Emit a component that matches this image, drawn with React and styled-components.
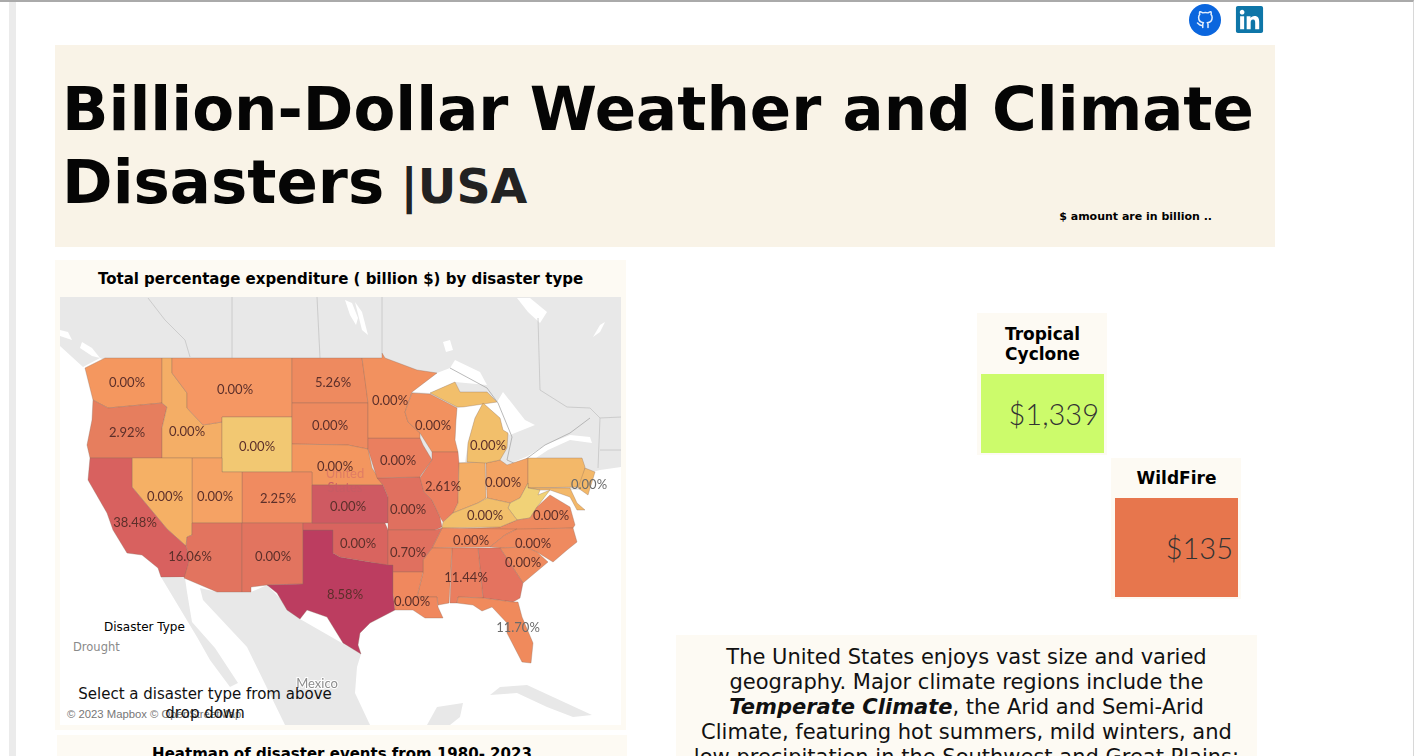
import React from 'react';
import styled, { createGlobalStyle } from 'styled-components';
import { FaLinkedin } from 'react-icons/fa';
import { FiGithub } from 'react-icons/fi';

const GlobalStyle = createGlobalStyle`
  html, body {
    margin: 0;
    padding: 0;
    background: #fff;
    font-family: "DejaVu Sans", sans-serif;
    color: #000;
  }
`;

const Shell = styled.div`
  height: 756px;
  box-sizing: border-box;
  overflow: hidden;
  border-top: 2px solid #aaa;
  border-right: 1px solid #d8d8d8;
`;

const Page = styled.div`
  margin-left: 9px;
  height: 754px;
  box-sizing: border-box;
  border-left: 7px solid #ebebeb;
  padding-left: 39px;
  width: 1266px;
`;

const IconBar = styled.div`
  display: flex;
  justify-content: flex-end;
  align-items: center;
  gap: 13px;
  height: 33px;
  padding: 1px 10px 0 0;
  margin-bottom: 9px;
  box-sizing: content-box;
`;

const GithubLink = styled.a`
  width: 32px;
  height: 32px;
  border-radius: 50%;
  background: #0b66de;
  color: #e4eefc;
  display: flex;
  align-items: center;
  justify-content: center;
`;

const LinkedinLink = styled.a`
  color: #0e76a8;
  display: flex;
  line-height: 0;
`;

const Banner = styled.header`
  height: 202px;
  box-sizing: border-box;
  background: #f9f3e7;
  padding: 27px 7px 0;
`;

const Title = styled.h1`
  margin: 0;
  font-size: 61px;
  line-height: 73px;
  font-weight: 700;
  color: #050505;
  span {
    margin-left: -5px;
    font-size: 47.5px;
    color: #222;
  }
`;

const Note = styled.p`
  margin: -13px 56px 0 0;
  text-align: right;
  font-size: 11px;
  line-height: 14px;
  font-weight: 700;
`;

const Columns = styled.div`
  display: grid;
  grid-template-columns: 571px 1fr;
  margin-top: 13px;
`;

const LeftColumn = styled.section`
  display: flex;
  flex-direction: column;
  gap: 5px;
`;

const MapPanel = styled.div`
  background: #fdfaf3;
  padding: 0 5px 5px;
`;

const PanelTitle = styled.h2`
  margin: 0;
  height: 37px;
  line-height: 39px;
  font-size: 15px;
  font-weight: 700;
  text-align: center;
`;

const MapCanvas = styled.div`
  position: relative;
  height: 428px;
  background: #fff;
  overflow: hidden;
  svg {
    display: block;
    filter: blur(0.3px);
  }
`;

const StateLabel = styled.text`
  font-family: "Lato", sans-serif;
  font-size: 13px;
  text-anchor: middle;
  fill: #5c2f2a;
`;

const PlaceLabel = styled.text`
  font-family: "Lato", sans-serif;
  font-size: 13px;
  text-anchor: middle;
  fill: ${(p) => p.$color};
  paint-order: stroke;
  stroke: ${(p) => p.$halo || 'none'};
  stroke-width: 2px;
`;

const LegendTitle = styled.div`
  position: absolute;
  left: 44px;
  top: 323px;
  font-size: 12px;
  line-height: 14px;
`;

const LegendValue = styled.div`
  position: absolute;
  left: 13px;
  top: 343px;
  font-size: 11.5px;
  line-height: 14px;
  color: #8a8a8a;
`;

const Attribution = styled.div`
  position: absolute;
  left: 7px;
  top: 411px;
  font-family: "Liberation Sans", sans-serif;
  font-size: 11.3px;
  line-height: 13px;
  color: #777;
`;

const MapHint = styled.div`
  position: absolute;
  left: 14px;
  top: 388px;
  width: 262px;
  font-size: 15px;
  line-height: 19px;
  text-align: center;
  color: #111;
`;

const HeatmapPanel = styled.div`
  margin-left: 2px;
  width: 570px;
  background: #fdfaf3;
`;

const RightColumn = styled.section`
  display: flex;
  flex-direction: column;
  padding: 53px 0 0 51px;
`;

const TileGrid = styled.div`
  display: grid;
  grid-template-columns: 130px 130px;
  column-gap: 4px;
  row-gap: 3px;
  margin-left: 300px;
`;

const Tile = styled.div`
  grid-column: ${(p) => p.$column};
  grid-row: ${(p) => p.$row};
  background: #fdfaf3;
  padding: 0 3px 2px 4px;
`;

const TileTitle = styled.div`
  display: flex;
  align-items: center;
  justify-content: center;
  height: ${(p) => p.$height}px;
  box-sizing: border-box;
  font-size: 17px;
  line-height: 20px;
  font-weight: 700;
  text-align: center;
`;

const TileValue = styled.div`
  display: flex;
  align-items: center;
  justify-content: flex-end;
  height: ${(p) => p.$height}px;
  padding-right: 5px;
  background: ${(p) => p.$color};
  font-family: "Lato", sans-serif;
  font-weight: 300;
  font-size: 29px;
  color: #333;
`;

const Story = styled.div`
  margin: 36px 0 0 -1px;
  width: 581px;
  box-sizing: border-box;
  padding: 10px 14px 0;
  background: #fdfaf3;
  font-size: 21px;
  line-height: 25px;
  text-align: center;
  color: #111;
  b { font-style: italic; }
`;

// state outlines, in page pixels (viewBox lines them up with the screenshot)
const STATES = [
  ['#f4975f', '85,368 105,358 162,358 162,403 108,408 93,400'],
  ['#e67e5e', '93,400 108,408 162,403 167,407 162,428 162,458 90,458 87,445 92,420'],
  ['#f4ae66', '162,358 172,358 172,373 187,393 187,408 203,425 222,422 222,458 162,458 162,428 167,407 162,403'],
  ['#f59763', '172,358 292,358 292,417 222,417 222,422 203,425 187,408 187,393 172,373'],
  ['#f2c872', '222,417 292,417 292,472 222,472'],
  ['#ee8a5f', '292,358 362,358 366,385 368,403 292,403'],
  ['#ee8a5f', '292,403 368,403 368,449 357,447 348,445 292,444'],
  ['#f3965f', '292,444 348,445 368,449 372,468 383,485 312,485 312,472 292,472'],
  ['#f08b60', '242,472 312,472 312,523 242,523'],
  ['#f5a264', '192,458 222,458 222,472 242,472 242,523 192,523'],
  ['#f5b065', '132,458 192,458 192,535 187,537 186,546 167,529 132,487'],
  ['#d8615f', '90,458 132,458 132,487 167,529 186,546 190,558 185,577 161,577 158,568 142,555 127,553 113,530 107,513 88,480'],
  ['#e2745f', '192,523 242,523 242,592 217,592 184,578 190,558 186,546 187,537 192,535'],
  ['#e2745f', '242,523 303,523 303,584 267,585 251,587 251,592 242,592'],
  ['#bc3d60', '303,530 333,530 333,553 340,557 370,562 393,565 393,593 395,610 370,623 360,633 358,645 361,654 343,643 327,617 307,610 300,619 287,610 277,593 267,585 303,584'],
  ['#d9645f', '303,523 385,523 388,530 388,565 370,562 340,557 333,553 333,530 303,530'],
  ['#cf5a62', '312,485 383,485 388,497 388,523 312,523'],
  ['#e0705f', '377,478 420,477 424,492 432,500 440,517 442,527 435,530 388,530 388,497 383,485'],
  ['#ea7f5f', '368,438 420,438 423,445 432,460 421,475 420,477 377,478 368,449'],
  ['#f2915f', '362,358 382,358 382,353 385,358 417,370 437,373 412,392 405,412 408,422 420,433 420,438 368,438 368,403'],
  ['#f2915f', '412,393 430,394 457,408 456,420 455,440 458,452 432,452 420,433 408,422 405,412'],
  ['#ec7f5f', '432,452 458,452 459,463 458,503 453,513 443,522 440,517 432,500 424,492 420,478 432,460'],
  ['#f4ae66', '459,463 485,462 486,498 478,503 453,513 458,503'],
  ['#f3a363', '486,463 500,460 507,465 528,458 528,483 520,498 510,503 487,498'],
  ['#f2bf6b', '430,393 455,382 460,392 487,392 497,402 463,407 457,407'],
  ['#f2bf6b', '467,462 468,443 475,418 483,403 500,418 503,430 508,433 507,448 500,460 486,463'],
  ['#f3b869', '528,458 582,458 585,467 582,487 528,488'],
  ['#f3b869', '585,468 595,472 588,495 578,488'],
  ['#f3b869', '528,488 570,488 577,503 585,510 577,510 570,497 550,490 540,490'],
  ['#f1d277', '508,508 510,503 520,498 528,483 528,488 540,490 538,495 550,490 537,507 530,518 517,520'],
  ['#ee8a5f', '500,527 517,520 530,518 537,507 550,495 570,507 575,525 573,528 517,530 442,530'],
  ['#f2bf6b', '453,513 478,503 487,498 510,503 508,508 517,520 500,527 442,528 443,522'],
  ['#f08b5f', '442,528 517,529 505,535 490,547 432,548'],
  ['#ef8a5f', '517,529 573,528 577,542 567,550 553,562 537,552 525,547 500,548 490,547 505,535'],
  ['#ef8b5f', '500,548 525,547 537,552 548,562 523,583'],
  ['#e4735f', '478,548 500,548 523,583 520,598 513,602 483,598'],
  ['#ea7e5f', '452,548 478,548 483,598 458,597 457,603 450,603'],
  ['#ef895f', '432,548 452,548 449,603 438,605 437,597 417,597 423,573 423,560'],
  ['#e0705f', '388,530 435,530 442,528 432,548 423,560 423,572 393,572 393,565 388,565'],
  ['#f0885e', '393,572 423,572 417,597 437,597 438,607 443,618 425,618 413,610 395,610 393,593'],
  ['#f08a5c', '458,597 483,598 513,602 518,602 522,617 533,643 531,663 522,662 507,633 507,623 492,607 482,611 473,605 457,603'],
];

const LABELS = [
  [127, 382, '0.00%'], [235, 389, '0.00%'], [333, 382, '5.26%'], [127, 432, '2.92%'],
  [187, 431, '0.00%'], [257, 446, '0.00%'], [330, 425, '0.00%'], [335, 466, '0.00%'],
  [390, 400, '0.00%'], [433, 425, '0.00%'], [488, 445, '0.00%'], [398, 460, '0.00%'],
  [443, 486, '2.61%'], [503, 482, '0.00%'], [408, 509, '0.00%'], [348, 506, '0.00%'],
  [165, 496, '0.00%'], [215, 496, '0.00%'], [278, 498, '2.25%'], [135, 522, '38.48%'],
  [190, 556, '16.06%'], [273, 556, '0.00%'], [345, 594, '8.58%'], [358, 543, '0.00%'],
  [408, 552, '0.70%'], [471, 540, '0.00%'], [533, 543, '0.00%'], [523, 562, '0.00%'],
  [551, 515, '0.00%'], [485, 515, '0.00%'], [466, 577, '11.44%'], [412, 601, '0.00%'],
];

const UsaMap = () => (
  <svg width="561" height="428" viewBox="60 297 561 428" xmlns="http://www.w3.org/2000/svg">
    {/* land */}
    <g fill="#e8e8e8">
      <polygon points="60,297 621,297 621,467 600,470 593,472 580,490 400,490 100,358 83,367 60,346" />
      <polygon points="161,577 185,578 187,592 192,622 215,648 238,683 230,687 210,660 197,637" />
      <polygon points="200,588 217,592 251,592 267,585 300,619 361,654 357,667 355,693 370,725 285,725 247,647 203,600" />
      <polygon points="427,725 437,707 463,703 460,717 450,725" />
      <polygon points="490,695 500,687 527,685 553,697 592,715 573,717 547,707 517,693" />
    </g>
    {/* lakes */}
    <g fill="#fff">
      <polygon points="412,392 437,373 450,368 455,360 480,372 487,385 455,382 430,393" />
      <polygon points="457,408 483,403 475,418 468,443 465,462 456,462 455,440" />
      <polygon points="483,403 497,402 503,392 525,420 535,425 510,435 503,430 500,418" />
      <polygon points="500,462 507,465 528,456 545,445 570,435 590,437 592,443 570,440 548,450 530,462 507,470" />
      <polygon points="517,298 530,298 547,312 540,323 528,312" />
      <polygon points="345,300 352,303 358,318 356,325 350,315" />
      <polygon points="355,302 362,312 368,335 362,330" />
      <polygon points="443,342 450,340 453,350 446,352" />
      <polygon points="593,337 600,325 605,322 600,332" />
      <polygon points="82,342 92,348 100,358 92,356 80,348" />
      <polygon points="60,330 68,332 72,340 60,336" />
    </g>
    {/* borders on the land */}
    <g fill="none" stroke="#c4c4c4" strokeWidth="0.8">
      <polyline points="232,297 232,358" />
      <polyline points="317,297 320,358" />
      <polyline points="382,297 382,353" />
      <polyline points="148,298 165,320 185,340 190,357" />
      <polyline points="538,318 540,390 567,407 590,408 600,418 621,417" />
      <polyline points="600,418 598,468" />
      <polyline points="450,368 487,388 498,403 512,437 507,460 518,465 545,445 570,433 590,418" stroke="#a8a8a8" />
      <polyline points="600,450 621,450" />
    </g>
    <g stroke="#8b6a5c" strokeWidth="0.6" strokeOpacity="0.55">
      {STATES.map(([fill, points]) => (
        <polygon key={points} fill={fill} points={points} />
      ))}
    </g>
    <PlaceLabel x="345" y="478" $color="#e07c64">United</PlaceLabel>
    <PlaceLabel x="345" y="492" $color="#c65c64">States</PlaceLabel>
    <PlaceLabel x="317" y="688" $color="#8d8d8d" $halo="#fff">Mexico</PlaceLabel>
    {LABELS.map(([x, y, text]) => (
      <StateLabel key={`${x}-${y}`} x={x} y={y + 5}>{text}</StateLabel>
    ))}
    <PlaceLabel x="589" y="489" $color="#6b6b6b">0.00%</PlaceLabel>
    <PlaceLabel x="518" y="632" $color="#6b6b6b">11.70%</PlaceLabel>
  </svg>
);

export default function App() {
  return (
    <>
      <GlobalStyle />
      <Shell>
        <Page>
          <IconBar>
            <GithubLink href="#github" aria-label="GitHub">
              <FiGithub size={18} />
            </GithubLink>
            <LinkedinLink href="#linkedin" aria-label="LinkedIn">
              <FaLinkedin size={31} />
            </LinkedinLink>
          </IconBar>
          <Banner>
            <Title>
              Billion-Dollar Weather and Climate Disasters <span>|USA</span>
            </Title>
            <Note>$ amount are in billion ..</Note>
          </Banner>
          <Columns>
            <LeftColumn>
              <MapPanel>
                <PanelTitle>Total percentage expenditure ( billion $) by disaster type</PanelTitle>
                <MapCanvas>
                  <UsaMap />
                  <LegendTitle>Disaster Type</LegendTitle>
                  <LegendValue>Drought</LegendValue>
                  <Attribution>© 2023 Mapbox © OpenStreetMap</Attribution>
                  <MapHint>Select a disaster type from above drop down</MapHint>
                </MapCanvas>
              </MapPanel>
              <HeatmapPanel>
                <PanelTitle>Heatmap of disaster events from 1980- 2023</PanelTitle>
              </HeatmapPanel>
            </LeftColumn>
            <RightColumn>
              <TileGrid>
                <Tile $column={1} $row={1}>
                  <TileTitle $height={61}>Tropical Cyclone</TileTitle>
                  <TileValue $height={79} $color="#ccfb6b">$1,339</TileValue>
                </Tile>
                <Tile $column={2} $row={2}>
                  <TileTitle $height={40}>WildFire</TileTitle>
                  <TileValue $height={99} $color="#e7764d">$135</TileValue>
                </Tile>
              </TileGrid>
              <Story>
                The United States enjoys vast size and varied geography. Major climate regions include the{' '}
                <b>Temperate Climate</b>, the Arid and Semi-Arid Climate, featuring hot summers, mild winters, and
                low precipitation in the Southwest and Great Plains;
              </Story>
            </RightColumn>
          </Columns>
        </Page>
      </Shell>
    </>
  );
}
